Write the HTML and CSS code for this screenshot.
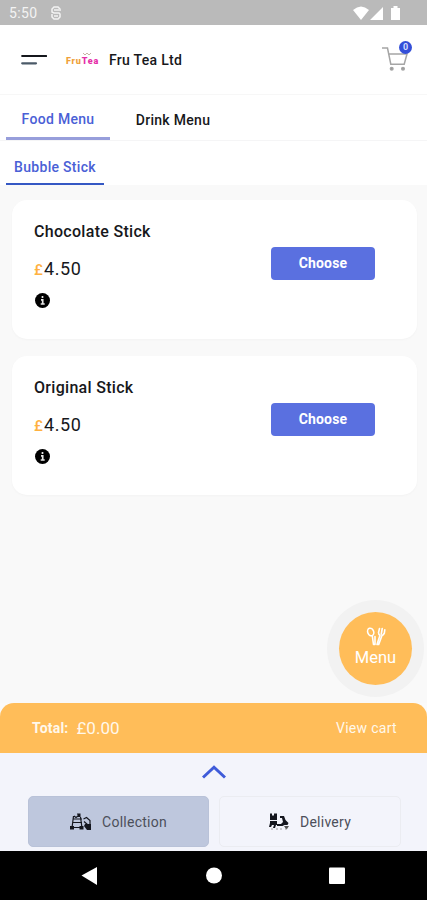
FILE: index.html
```html
<!DOCTYPE html>
<html lang="en">
<head>
<meta charset="utf-8">
<title>Fru Tea Ltd</title>
<link rel="stylesheet" href="styles.css">
</head>
<body>
<div class="status">
  <span class="time">5:50</span>
  <svg class="notif" width="10" height="14" viewBox="0 0 10 14" fill="none" stroke="#f3f3f3" stroke-width="1.5"><path d="M9 5V3L7 1H3L1 3v3l2 1h5l1 1v3l-2 2H3l-2-2V8M3 4h5M3 10h4"/></svg>
  <svg class="signals" width="48" height="15" viewBox="0 0 48 15" fill="#fff"><path d="M0 4Q8-3 16 4L8 14ZM30 1v13H17ZM38 2h2.500V0h4v2H47v12h-9Z"/></svg>
</div>
<header class="header">
  <svg class="burger" width="26" height="12" viewBox="0 0 26 12" stroke-linecap="round" stroke-width="2.2"><path d="M1.2 2h24" stroke="#15171c"/><path d="M1.2 9.3H15" stroke="#4b5a68"/></svg>
  <div class="logo"><span class="fru">Fru</span><span class="tea">Tea</span>
    <svg class="crown" width="8" height="4" viewBox="0 0 8 4" fill="none" stroke="#b9a08c" stroke-width=".8"><path d="M0 1l2 2 2-2 2 2 2-2"/></svg>
  </div>
  <h1 class="brand">Fru Tea Ltd</h1>
  <div class="cart">
    <svg width="26" height="26" viewBox="0 0 26 26" fill="none" stroke="#a5a5a5" stroke-width="1.5"><path d="M0 2h5.500l3.300 16.200h13.400L25 8H7"/><circle cx="9.700" cy="22.700" r="1.300" fill="#8d8d8d"/><circle cx="21" cy="22.700" r="1.300" fill="#8d8d8d"/></svg>
    <span class="badge">0</span>
  </div>
</header>
<nav class="tabs">
  <span class="tab active">Food Menu</span>
  <span class="tab">Drink Menu</span>
</nav>
<nav class="subtabs"><span class="subtab">Bubble Stick</span></nav>
<main class="list">
  <article class="card">
    <div class="info">
      <h2>Chocolate Stick</h2>
      <p class="price"><span class="cur">£</span>4.50</p>
      <svg class="i" width="15" height="15" viewBox="0 0 15 15"><circle cx="7.500" cy="7.500" r="7.500"/><path d="M7.500 3v2M6 6.800h1.700V11M5.700 11h4" fill="none" stroke="#e8e8e8" stroke-width="1.700"/></svg>
    </div>
    <button class="choose">Choose</button>
  </article>
  <article class="card">
    <div class="info">
      <h2 class="second">Original Stick</h2>
      <p class="price"><span class="cur">£</span>4.50</p>
      <svg class="i" width="15" height="15" viewBox="0 0 15 15"><circle cx="7.500" cy="7.500" r="7.500"/><path d="M7.500 3v2M6 6.800h1.700V11M5.700 11h4" fill="none" stroke="#e8e8e8" stroke-width="1.700"/></svg>
    </div>
    <button class="choose">Choose</button>
  </article>
</main>
<div class="fab">
  <div class="disc">
    <svg width="20" height="19" viewBox="0 0 20 19" fill="none" stroke="#fff" stroke-width="1.600" stroke-linecap="round" stroke-linejoin="round"><ellipse cx="4.700" cy="5" rx="3" ry="3.900" transform="rotate(-20 4.700 5)"/><path d="M6.300 9L7.500 17.500h1.500L9 9.500M13.500 1.500L12.500 5.500q0 2 1.500 2.700L11 17.500h1.700L16 8.500q1.700-.5 2.300-2.200l.5-3.500M16.200 1.500L15.300 7"/></svg>
    <span>Menu</span>
  </div>
</div>
<section class="total">
  <b>Total:</b><span class="sum">£0.00</span><span class="view">View cart</span>
</section>
<section class="sheet">
  <svg class="chev" width="24" height="14" viewBox="0 0 24 14" fill="none" stroke="#3f5bd9" stroke-width="3"><path d="M1 12.500L12 2.200l11 10.300"/></svg>
  <div class="modes">
    <div class="mode selected">
      <svg width="22" height="18" viewBox="0 0 22 18" fill="none" stroke="#15171f" stroke-width="1.200"><path d="M3 6h9M2.500 9.500h9.500M1 14.500h12M3.500 3L2 15M10.500 4l1.500 11M4 3l2 1.500L8 3"/><path d="M0 13h4v3.500H0zM9.500 13h4v3.500h-4zM7 .5h3.500V4H8zM15 11h6v6h-4l-3-4z" fill="#15171f" stroke="none"/><path d="M13.500 6l3-1.500 3.500 3v4M14 8.500l4 3.500"/></svg>
      <span>Collection</span>
    </div>
    <div class="mode">
      <svg width="21" height="17" viewBox="0 0 21 17" fill="#15171f"><path d="M1 .5h2v2h2v-2h3V7H1zM1 8h7v4H7l-1 3H4l1-3H3l-1 2H0l1-4zM11 3h4l1.500 4 3 3-1 2h-3l-2 1H8v-2h4l2-2-1-4h-2z"/><path d="M15 13h5l-2 3h-1z" fill="#555"/><path d="M2 16h2m3 0h2m2 0h2m3 0h2" stroke="#888" stroke-width=".8"/></svg>
      <span>Delivery</span>
    </div>
  </div>
</section>
<footer class="sysnav">
  <svg width="427" height="49" viewBox="0 0 427 49" fill="#fff"><path d="M81.500 24.500L97 16v18z"/><circle cx="214" cy="24.500" r="8"/><rect x="329" y="16.500" width="16" height="16.500" rx="1"/></svg>
</footer>
</body>
</html>
```
FILE: styles.css
```css
* { box-sizing: border-box; }
body {
  margin: 0;
  width: 427px;
  height: 900px;
  overflow: hidden;
  position: relative;
  display: flex;
  flex-direction: column;
  background: #fafafa;
  font-family: Roboto, "Liberation Sans", sans-serif;
  color: #17181b;
}
h1, h2, p { margin: 0; font-weight: 500; }
svg { display: block; flex: none; }
span, b, h1, h2, p { white-space: nowrap; }
.status {
  height: 25px;
  background: #bababa;
  display: flex;
  align-items: center;
  padding: 1px 26px 0 9px;
  color: #f3f3f3;
}
.time { width: 42px; font-size: 14px; letter-spacing: .4px; }
.signals { margin-left: auto; }
.header {
  height: 70px;
  display: flex;
  align-items: center;
  padding: 0 18px 0 21px;
  background: #fff;
  border-bottom: 1px solid #f7f7f7;
}
.logo {
  position: relative;
  display: flex;
  width: 36px;
  margin-left: 19px;
  padding-top: 3px;
  font: 900 9px/10px Roboto, sans-serif;
  letter-spacing: .8px;
}
.fru { color: #efa13a; }
.tea { color: #e52fa8; }
.crown { position: absolute; left: 17px; top: -1px; }
.brand { margin-left: 7px; font-size: 14px; letter-spacing: .3px; }
.cart { position: relative; margin: -1px 0 0 auto; width: 27px; height: 26px; }
.badge {
  position: absolute;
  left: 17px;
  top: -5px;
  width: 13px;
  height: 13px;
  border-radius: 50%;
  background: #344fd8;
  color: #d4dcff;
  font: 700 9px/13px Roboto, sans-serif;
  text-align: center;
}
.tabs {
  height: 46px;
  display: flex;
  background: #fff;
  border-bottom: 1px solid #f5f5f6;
  padding-left: 6px;
}
.tab { width: 104px; text-align: center; font-size: 14px; line-height: 50px; font-weight: 500; letter-spacing: .3px; }
.tab + .tab { margin-left: 11px; }
.active { color: #4a60d6; line-height: 48px; border-bottom: 3px solid #979edb; }
.subtabs { height: 45px; padding-left: 6px; background: #fff; border-bottom: 1px solid #f9f9f9; }
.subtab {
  display: block;
  width: 98px;
  height: 44px;
  border-bottom: 2px solid #3558c4;
  color: #4a60d6;
  font-size: 14px;
  font-weight: 500;
  line-height: 52px;
  text-align: center;
  letter-spacing: .3px;
}
.list { flex: 1; padding: 14px 10px 0 12px; background: #f9f9f9; }
.card {
  height: 139px;
  margin-bottom: 17px;
  padding: 22px 42px 0 22px;
  display: flex;
  justify-content: space-between;
  background: #fff;
  border-radius: 15px;
  box-shadow: 0 1px 2px #f3f3f3;
}
.info { display: flex; flex-direction: column; }
.info h2 { font-size: 16px; line-height: 20px; letter-spacing: .3px; }
.price { display: flex; align-items: baseline; margin-top: 14px; font-size: 18px; line-height: 26px; font-weight: 400; letter-spacing: .6px; }
.cur { width: 10px; color: #ffb140; font-size: 15px; font-weight: 500; }
.i { margin-top: 10px; margin-left: 1px; }
.choose {
  width: 104px;
  height: 33px;
  margin: 25px 0 0;
  padding: 0;
  border: 0;
  border-radius: 4px;
  background: #5a70e0;
  color: #fff;
  font: 700 14px/33px Roboto, sans-serif;
  letter-spacing: .15px;
}
.fab {
  position: absolute;
  left: 327px;
  top: 600px;
  width: 97px;
  height: 97px;
  border-radius: 50%;
  background: #f2f2f2;
  display: grid;
  place-items: center;
}
.disc {
  width: 73px;
  height: 73px;
  border-radius: 50%;
  background: #ffbd59;
  color: #fff;
  display: flex;
  flex-direction: column;
  align-items: center;
  padding-top: 15px;
  font-size: 16.5px;
  line-height: 23px;
}
.total {
  height: 50px;
  padding: 0 30px 0 32px;
  display: flex;
  align-items: center;
  background: #ffbd59;
  border-radius: 14px 14px 0 0;
  color: #fff8eb;
  font-size: 14px;
}
.total b { letter-spacing: .2px; }
.sum { margin-left: 8px; font-size: 17px; }
.view { margin-left: auto; letter-spacing: .3px; }
.sheet {
  height: 98px;
  background: #f3f4fb;
  display: flex;
  flex-direction: column;
  align-items: center;
  padding-top: 12px;
}
.modes { display: flex; gap: 10px; margin: 17px 0 0 2px; }
.mode {
  width: 182px;
  height: 51px;
  display: flex;
  align-items: center;
  justify-content: center;
  gap: 10px;
  border: 1px solid #ebecf1;
  border-radius: 5px;
  color: #4c4f5a;
  font-size: 14px;
  letter-spacing: .25px;
}
.mode.selected { width: 181px; background: #bec7dd; border-color: #b9c2d8; }
.sysnav { height: 49px; background: #000; }
```
